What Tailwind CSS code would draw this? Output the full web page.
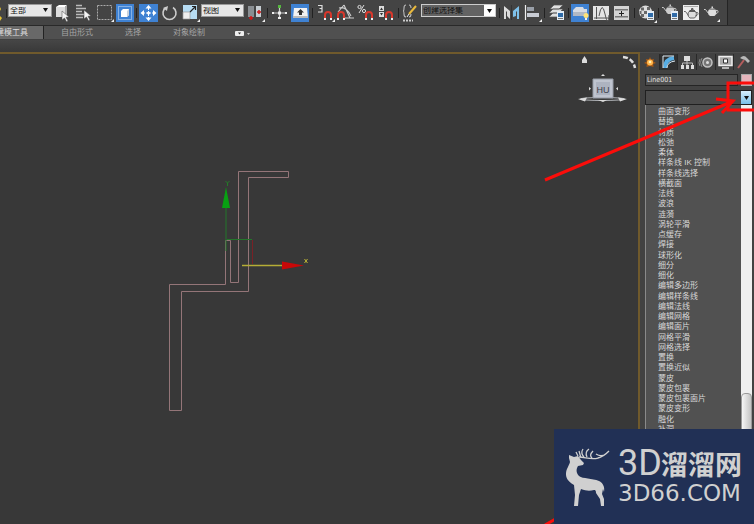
<!DOCTYPE html>
<html lang="zh-CN">
<head>
<meta charset="utf-8">
<meta name="viewport" content="width=device-width, initial-scale=1">
<title>Line001</title>
<script src="https://cdn.jsdelivr.net/npm/@tailwindcss/browser@4"></script>
</head>
<body class="relative flex min-h-screen flex-col overflow-hidden bg-[#383838] font-['Liberation_Sans','Noto_Sans_CJK_SC',sans-serif] text-[8px] leading-none text-[#d0d0d0]">

<!-- Shared icon parts -->
<svg class="hidden" aria-hidden="true">
  <defs>
    <g id="magnet"><path d="M1 8V4a3 3 0 0 1 6 0v4" fill="none" stroke="#d8382c" stroke-width="2"/><path d="M0 7h2v2H0zM6 7h2v2H6z" fill="#eee"/></g>
    <path id="pointer" d="M0 0l7 6-3 .3 2 3.700-1.500.8-2-3.800L0 9z" fill="#f4f4f4" stroke="#444" stroke-width=".5"/>
    <path id="corner" d="M3 0v3H0z" fill="#eee"/>
    <g id="teapot"><path d="M5 3.500h6.500c1.500 2 1 5-1 6.500h-4.500C3.500 8.500 3.500 5.500 5 3.500z"/><path d="M5.500 2.800q2.700-1.600 5.500 0zM7.500 .5h1.500v1.500H7.500z"/><path d="M4.500 7.500L1.500 3.500H0M12 4.500c3-1 2.500 3-.5 3.500" fill="none" stroke="currentColor"/></g>
    <g id="page"><path d="M0 0h7v9H0z" fill="#e4edf5"/><path d="M1 2h5v4H1z" fill="#2f6ba8"/><path d="M1 7.500h5" stroke="#777"/></g>
  </defs>
</svg>

<header>
  <div class="flex h-[26px] border-b border-[#292929] bg-[#3a3a3a]">
    <div role="toolbar" aria-label="主工具栏" class="flex h-[25px] shrink-0 items-center border-r border-[#242424] bg-[#444]">
      <svg class="h-5 w-2" viewBox="0 0 8 20"><path d="M0 4l1 2-1 2zM0 13l2 2-2 3z" fill="#e2c032"/><path d="M6.500 6v9" stroke="#222"/></svg>
      <div class="relative mb-1 w-11">
        <select aria-label="选择过滤器" class="block h-[13px] w-full appearance-none border border-[#999] bg-[#e6e6e6] pl-px text-[8px] leading-none text-[#111]"><option>全部</option></select>
        <svg class="pointer-events-none absolute top-1 right-1 h-1 w-[5px]" viewBox="0 0 5 4"><path d="M0 0h5L2.500 4z" fill="#111"/></svg>
      </div>
      <button aria-label="选择对象" class="h-5 w-[21px]"><svg viewBox="0 0 21 20"><path d="M4 4l3-2h8l-2 2z" fill="#fff"/><path d="M4 4h9v10H4z" fill="#ddd"/><path d="M13 4l2-2v10l-2 2z" fill="#aaa"/><use href="#pointer" x="10" y="8"/></svg></button>
      <button aria-label="按名称选择" class="h-5 w-[21px]"><svg viewBox="0 0 21 20"><path d="M3 2.500h6M3 5.500h10M3 8.500h6M3 11.500h8M3 14.500h7" stroke="#bbb" stroke-width="1.300"/><use href="#pointer" x="11" y="7"/></svg></button>
      <button aria-label="矩形选择区域" class="h-5 w-[21px]"><svg viewBox="0 0 21 20"><path d="M3.500 2.500h14v14h-14z" fill="none" stroke="#aaa" stroke-dasharray="2 1"/><use href="#corner" x="17" y="16"/></svg></button>
      <button aria-label="窗口/交叉" class="h-5 w-[21px]"><svg viewBox="0 0 21 20"><path d="M1 1h18v18H1z" fill="#3f82d3"/><path d="M3.500 3.500h13v13h-13z" fill="none" stroke="#cfe0f5" stroke-dasharray="1 1"/><path d="M6 8l2-2h6v6l-2 2H6z" fill="#fff"/><path d="M12 8l2-2v6l-2 2z" fill="#c9d2dd"/></svg></button>
      <svg class="h-5 w-0.5" viewBox="0 0 2 20"><path d="M.5 5v10" stroke="#222"/></svg>
      <button aria-label="选择并移动" class="h-5 w-[21px]"><svg viewBox="0 0 21 20"><path d="M1 1h19v18H1z" fill="#3f82d3"/><path d="M10.500 2l3 3.500h-6zM10.500 18l3-3.500h-6zM2.500 10L6 7v6zM18.500 10L15 7v6z" fill="#fff"/><path d="M10.500 5v10M5 10h11" stroke="#fff" stroke-dasharray="2 1"/><circle cx="10.500" cy="10" r="1.500" fill="#fff"/></svg></button>
      <button aria-label="选择并旋转" class="h-5 w-[21px]"><svg viewBox="0 0 21 20"><path d="M7 4.500a6.500 6.500 0 1 0 7 0" fill="none" stroke="#ccc" stroke-width="1.600"/><path d="M4 5l5-2-1 5z" fill="#ccc"/></svg></button>
      <button aria-label="选择并缩放" class="h-5 w-[21px]"><svg viewBox="0 0 21 20"><path d="M3 2h14v14H3z" fill="#b6dcf3"/><path d="M3 9h7v7H3z" fill="#eee" stroke="#999" stroke-width=".7"/><path d="M10 9l5-5M12 3.500h3.500V7" fill="none" stroke="#222" stroke-width="1.200"/><use href="#corner" x="17" y="16"/></svg></button>
      <div class="relative mb-1 w-[43px]">
        <select aria-label="参考坐标系" class="block h-[13px] w-full appearance-none border border-[#999] bg-[#e6e6e6] pl-px text-[8px] leading-none text-[#111]"><option>视图</option></select>
        <svg class="pointer-events-none absolute top-1 right-1 h-1 w-[5px]" viewBox="0 0 5 4"><path d="M0 0h5L2.500 4z" fill="#111"/></svg>
      </div>
      <button aria-label="使用轴点中心" class="ml-px h-5 w-[21px]"><svg viewBox="0 0 21 20"><path d="M3 3h6v11H3z" fill="#8a8e92"/><path d="M11 3h5v11h-5z" fill="#c7cdd2"/><path d="M4 15h4M6 13v4M12 9h4M14 7v4" stroke="#d41818" stroke-width="1.500"/><use href="#corner" x="17" y="16"/></svg></button>
      <svg class="h-5 w-[3px]" viewBox="0 0 3 20"><path d="M1.500 5v10" stroke="#222"/></svg>
      <button aria-label="选择并操纵" class="h-5 w-[21px]"><svg viewBox="0 0 21 20"><path d="M10.500 4v12M4 10h13" stroke="#ccc" stroke-width="1.200"/><path d="M9 2h3v3H9z" fill="#55b83e"/><path d="M9 14h3v2H9zM3 9h2v2H3zM16 9h2v2h-2zM9 8.500h3v3H9z" fill="#eee"/></svg></button>
      <button aria-label="键盘快捷键覆盖切换" class="h-5 w-[21px]"><svg viewBox="0 0 21 20"><path d="M1 1h18v18H1z" fill="#3f82d3"/><path d="M4 5h13l1 10H3z" fill="#f2f2f2"/><path d="M3 13h15v2H3z" fill="#bbb"/><path d="M10.500 6l3.500 3.500h-2V12H9V9.500H7z" fill="#333"/></svg></button>
      <svg class="h-5 w-1" viewBox="0 0 4 20"><path d="M1.500 5v10" stroke="#222"/></svg>
      <button aria-label="捕捉开关" class="h-5 w-5"><svg viewBox="0 0 20 20"><path d="M3 2.500h4v3H4.500M7 5v4H3" fill="none" stroke="#ddd" stroke-width="1.200"/><use href="#magnet" x="9" y="8"/><use href="#corner" x="17" y="16"/></svg></button>
      <button aria-label="角度捕捉切换" class="h-5 w-5"><svg viewBox="0 0 20 20"><path d="M3 9l6-7M9 2l6 13M8 15h11M4 5q7-2 12 8" fill="none" stroke="#ccc" stroke-width="1.100"/><use href="#magnet" x="2" y="8"/></svg></button>
      <button aria-label="百分比捕捉切换" class="h-5 w-5"><svg viewBox="0 0 20 20"><circle cx="4.500" cy="4" r="1.600" fill="none" stroke="#ddd"/><circle cx="9" cy="8" r="1.600" fill="none" stroke="#ddd"/><path d="M9 2L4 10" stroke="#ddd"/><use href="#magnet" x="10" y="8"/></svg></button>
      <button aria-label="微调器捕捉切换" class="h-5 w-5"><svg viewBox="0 0 20 20"><path d="M4 3h5v5H4zM4 9h5v5H4z" fill="#ddd"/><path d="M5 7h3L6.500 4.500zM5 10h3l-1.500 2.500z" fill="#333"/><use href="#magnet" x="10" y="8"/></svg></button>
      <svg class="h-5 w-1" viewBox="0 0 4 20"><path d="M3.500 5v10" stroke="#222"/></svg>
      <button aria-label="编辑命名选择集" class="h-5 w-[21px]"><svg viewBox="0 0 21 20"><path d="M7 2q-2 0-2 3t-1 3q1 0 1 3t2 3M10 2q2 0 2 3M12 11q0 3-2 3" fill="none" stroke="#bbb" stroke-width="1.100"/><path d="M17 3l-7 8" stroke="#e9b93d" stroke-width="2"/><path d="M10 11l-2 3" stroke="#eee"/><path d="M4 17.500h10" stroke="#ccc" stroke-width="2" stroke-dasharray="2 1"/></svg></button>
      <div class="relative mb-1 ml-px w-[75px]">
        <select aria-label="创建选择集" class="block h-[13px] w-full appearance-none border border-[#ccc] bg-[#636363] pl-px text-[8px] leading-none text-[#111]"><option>创建选择集</option></select>
        <span class="pointer-events-none absolute top-px right-px flex h-[11px] w-[11px] items-center justify-center bg-white"><svg class="h-1 w-[5px]" viewBox="0 0 5 4"><path d="M0 0h5L2.500 4z" fill="#111"/></svg></span>
      </div>
      <svg class="h-5 w-[5px]" viewBox="0 0 5 20"><path d="M3.500 5v10" stroke="#222"/></svg>
      <button aria-label="镜像" class="h-5 w-[21px]"><svg viewBox="0 0 21 20"><path d="M3 3l6 5v8l-3-3V9L5 8v8H3z" fill="#ddd"/><path d="M18 3l-6 5v6l3-1V9l1-1v8h2z" fill="#7dbfe8"/><path d="M10.500 2v15" stroke="#333"/></svg></button>
      <button aria-label="对齐" class="h-5 w-[21px]"><svg viewBox="0 0 21 20"><path d="M3.500 2v15" stroke="#eee" stroke-width="1.200"/><path d="M5 4h7v4H5z" fill="#999fa8"/><path d="M5 10h12v4H5z" fill="#c8ccd4"/><use href="#corner" x="17" y="16"/></svg></button>
      <svg class="h-5 w-[3px]" viewBox="0 0 3 20"><path d="M1.500 5v10" stroke="#222"/></svg>
      <button aria-label="层管理器" class="h-5 w-[21px]"><svg viewBox="0 0 21 20"><path d="M3 14l4-4h10l-4 4zM3 10l4-4h10l-4 4zM4 6l4-4h9l-4 4z" fill="#e0e0e0" stroke="#555" stroke-width=".7"/><use href="#page" x="11" y="8"/></svg></button>
      <svg class="h-5 w-[3px]" viewBox="0 0 3 20"><path d="M1.500 5v10" stroke="#222"/></svg>
      <button aria-label="切换功能区" class="h-5 w-[21px]"><svg viewBox="0 0 21 20"><path d="M1 1h18v18H1z" fill="#3f82d3"/><path d="M3 7l3-3h7l1 2h3v7H3z" fill="#d7dce4"/><path d="M3 9h14v4H3z" fill="#b1b9c5"/><circle cx="16" cy="12.500" r="2.500" fill="#ffe379"/><path d="M15 15h2v2h-2z" fill="#eee"/></svg></button>
      <button aria-label="曲线编辑器" class="h-5 w-[21px]"><svg viewBox="0 0 21 20"><path d="M2 3h16v14H2z" fill="#e5e5e5"/><path d="M3 15h14M5.500 4v12M8 13q3-16 6-2t4 1" fill="none" stroke="#555"/></svg></button>
      <button aria-label="图解视图" class="h-5 w-[21px]"><svg viewBox="0 0 21 20"><path d="M2 3h15v14H2z" fill="#d5d5d5"/><path d="M3 6h13v1.500H3zM3 13h13v1.500H3z" fill="#777"/><path d="M9.500 8v5M7 10.500h5" fill="none" stroke="#222"/></svg></button>
      <svg class="h-5 w-[3px]" viewBox="0 0 3 20"><path d="M1.500 5v10" stroke="#222"/></svg>
      <button aria-label="材质编辑器" class="h-5 w-[21px]"><svg viewBox="0 0 21 20"><circle cx="9.500" cy="9" r="6.500" fill="#ddd"/><path d="M5 4.500h3v3H5zM11 4h3v3h-3zM8 8h3v3H8zM3.500 8h2v3h-2zM5 11h3v3H5z" fill="#686868"/><use href="#page" x="11" y="8"/><use href="#corner" x="18" y="17"/></svg></button>
      <svg class="h-5 w-[3px]" viewBox="0 0 3 20"><path d="M1.500 5v10" stroke="#222"/></svg>
      <button aria-label="渲染设置" class="h-5 w-[21px] text-[#ccc]"><svg viewBox="0 0 21 20"><use href="#teapot" fill="#ccc" x="2" y="1"/><use href="#page" x="11" y="8"/></svg></button>
      <button aria-label="渲染帧窗口" class="h-5 w-[21px] text-[#444]"><svg viewBox="0 0 21 20"><path d="M2 2h16v15H2z" fill="#eee"/><path d="M3 3.500h14" stroke="#aaa"/><use href="#teapot" fill="#ddd" stroke="#444" stroke-width=".8" x="3" y="5"/></svg></button>
      <button aria-label="渲染产品" class="h-5 w-[21px] text-[#ccc]"><svg viewBox="0 0 21 20"><use href="#teapot" fill="#ddd" x="2" y="3"/><use href="#corner" x="15" y="16"/></svg></button>
      <span class="w-1"></span>
    </div>
  </div>
  <nav aria-label="功能区" class="flex h-[14px] items-stretch border-b border-[#404040] bg-[#505050] text-[#a5a5a5]">
    <a href="#" class="flex w-11 items-center justify-end overflow-hidden border-r border-[#222] bg-[#686868] pr-[15px] whitespace-nowrap text-[#ddd]">建模工具</a>
    <a href="#" class="flex items-center pl-[17px]">自由形式</a>
    <a href="#" class="flex items-center pl-8">选择</a>
    <a href="#" class="flex items-center pl-8">对象绘制</a>
    <button aria-label="最小化功能区" class="ml-[30px] flex items-center"><svg class="h-2 w-4" viewBox="0 0 16 8"><rect y="2" width="9" height="5" rx="1" fill="#eee"/><path d="M3 3.500h3L4.500 5.500z" fill="#333"/><path d="M12 4h3l-1.500 2z" fill="#bbb"/></svg></button>
  </nav>
  <div class="h-3 bg-linear-to-b from-[#464646] to-[#393939]"></div>
</header>

<div class="flex flex-1 items-stretch">
  <main aria-label="视口" class="relative flex-1 overflow-hidden border-t-2 border-r-2 border-[#705a2c] bg-[#383838]">
    <svg class="block h-[400px] w-[400px]" viewBox="0 54 400 400" aria-label="Line001">
      <path d="M169.500 410.500v-126h56v-44h5v42h8v-111h50v6h-40v114h-67v119z" fill="none" stroke="#947578"/>
      <path d="M226 206v45M227 239.500h25" stroke="#23762a" fill="none"/>
      <path d="M252.500 240v24" stroke="#792126"/>
      <path d="M226 187l4 21h-8z" fill="#08a012"/>
      <path d="M242 265.500h41" stroke="#b5ad36" stroke-width="1.500"/>
      <path d="M282 261.500l22 4-22 4z" fill="#c90808"/>
      <path d="M225.500 181l2 2 2-2M227.500 183v3" fill="none" stroke="#237b28"/>
      <path d="M304.500 259l3 4M307.500 259l-3 4" stroke="#bdb536"/>
    </svg>
    <svg class="absolute top-0 right-0 h-[54px] w-[68px]" viewBox="570 54 68 54" aria-label="ViewCube">
      <path d="M582 60l2.500-4 2.500 4v3h-5z" fill="#ddd"/>
      <path d="M623 57q10 1 12 11" fill="none" stroke="#ddd" stroke-width="2.500" stroke-dasharray="5 2"/>
      <ellipse cx="602.500" cy="99" rx="22" ry="1.500" fill="none" stroke="#b0b3b7"/>
      <path d="M578 99l9-1.500-2 4zM627 99l-9-1.500 2 4zM598 100h9l-4 2z" fill="#ddd"/>
      <path d="M601 76l2-2 2 2zM589 87l2 1.500-2 2zM618 87l-2 1.500 2 2z" fill="#ddd"/>
      <path d="M593 79h20v19h-20z" fill="#bfc4cf" stroke="#969ba5"/>
      <path d="M596 82h14v13h-14z" fill="#adb3c0"/>
      <text x="603" y="92.500" text-anchor="middle" font-size="9" font-family="Liberation Sans" fill="#3c414b">HU</text>
    </svg>
  </main>

  <aside aria-label="命令面板" class="w-[114px] shrink-0 border-t border-[#4c4c4c] bg-[#424242] pr-0.5 pl-[5px]">
    <div role="tablist" class="-ml-1 flex h-[18px] items-center divide-x divide-[#292929]">
      <button role="tab" aria-label="创建" class="flex flex-1 justify-center"><svg class="size-4" viewBox="0 0 16 16"><path d="M8 3l1.200 2.500L12 5l-.8 2.500L14 9l-2.800 1 .3 3-3.500-1-3.500 1 .3-3L2 9l2.800-1.500L4 5l2.800.5z" fill="#a75914"/><circle cx="8" cy="8.500" r="3" fill="#ffb64d"/><circle cx="8" cy="8" r="1.300" fill="#fff2ba"/></svg></button>
      <button role="tab" aria-label="修改" aria-selected="true" class="flex flex-1 justify-center bg-[#303030]"><svg class="size-4" viewBox="0 0 16 16"><path d="M4 14Q4 5 13 4" fill="none" stroke="#58aee4" stroke-width="4"/><path d="M2 2h11M2 2v12M6 14q0-6 8-7" fill="none" stroke="#dceaf4"/></svg></button>
      <button role="tab" aria-label="层次" class="flex flex-1 justify-center"><svg class="size-4" viewBox="0 0 16 16"><path d="M5 2h6v5H5zM2 11h3v4H2zM7 11h3v4H7zM12 11h3v4h-3z" fill="#ddd"/><path d="M8 7v4M3.500 11V9h10v2" fill="none" stroke="#bbb"/></svg></button>
      <button role="tab" aria-label="运动" class="flex flex-1 justify-center"><svg class="size-4" viewBox="0 0 16 16"><circle cx="9.500" cy="8.500" r="4.500" fill="#777" stroke="#c4c4c4" stroke-width="1.500"/><circle cx="9.500" cy="8.500" r="1.500" fill="#ddd"/><path d="M4 4q-3 4 0 9M2 5q-2 4 0 7" fill="none" stroke="#888"/></svg></button>
      <button role="tab" aria-label="显示" class="flex flex-1 justify-center"><svg class="size-4" viewBox="0 0 16 16"><path d="M2 2.500h13v9H2z" fill="#aaa" stroke="#eee" stroke-width="1.500"/><path d="M6.500 5h4v4h-4z" fill="#fff" stroke="#333"/><path d="M5 14h7" stroke="#ddd" stroke-width="1.500"/></svg></button>
      <button role="tab" aria-label="实用程序" class="flex flex-1 justify-center"><svg class="size-4" viewBox="0 0 16 16"><path d="M9 6l-6 8" stroke="#b45d5d" stroke-width="2"/><path d="M5 4q4-4 7 0l3 3-2 2-3-3-3-1z" fill="#b8b8b8"/></svg></button>
    </div>
    <div class="mt-[3px] flex h-3 items-stretch justify-between">
      <input aria-label="对象名称" value="Line001" class="w-[93px] border border-[#252525] bg-[#505050] pl-px font-['DejaVu_Sans_Condensed','DejaVu_Sans',sans-serif] text-[7px] leading-none text-[#e0e0e0]">
      <button aria-label="对象颜色" class="w-[11px] border border-[#aaa] bg-[#e5b5bc]"></button>
    </div>
    <button aria-label="修改器列表" aria-haspopup="listbox" aria-expanded="true" class="mt-1 flex h-[15px] w-full items-stretch justify-end border border-[#202020] bg-[#4b4b4b]">
      <span class="flex w-[10px] items-center justify-center bg-linear-to-b from-[#d8effc] to-[#78bfe8]"><svg class="h-1 w-[5px]" viewBox="0 0 5 4"><path d="M0 0h5L2.500 4z" fill="#111"/></svg></span>
    </button>
    <div class="flex border-l border-[#8a8a8a] bg-[#515151]">
      <ul role="listbox" aria-label="修改器" class="grid h-[330px] flex-1 auto-rows-fr items-center pt-0.5 pl-3 whitespace-nowrap text-[#d8d8d8]">
        <li role="option">曲面变形</li><li role="option">替换</li><li role="option">材质</li><li role="option">松弛</li>
        <li role="option">柔体</li><li role="option">样条线 IK 控制</li><li role="option">样条线选择</li><li role="option">横截面</li>
        <li role="option">法线</li><li role="option">波浪</li><li role="option">涟漪</li><li role="option">涡轮平滑</li>
        <li role="option">点缓存</li><li role="option">焊接</li><li role="option">球形化</li><li role="option">细分</li>
        <li role="option">细化</li><li role="option">编辑多边形</li><li role="option">编辑样条线</li><li role="option">编辑法线</li>
        <li role="option">编辑网格</li><li role="option">编辑面片</li><li role="option">网格平滑</li><li role="option">网格选择</li>
        <li role="option">置换</li><li role="option">置换近似</li><li role="option">蒙皮</li><li role="option">蒙皮包裹</li>
        <li role="option">蒙皮包裹面片</li><li role="option">蒙皮变形</li><li role="option">融化</li><li role="option">补洞</li>
      </ul>
      <div class="flex w-[11px] flex-col justify-end bg-[#efefef]">
        <div class="h-[42px] rounded-t-sm border border-[#999] bg-linear-to-r from-[#f6f6f6] to-[#c4c4c4]"></div>
      </div>
    </div>
  </aside>
</div>

<!-- Tutorial arrow and highlight, above the interface -->
<svg class="pointer-events-none absolute top-0 right-0 h-[524px] w-[214px]" viewBox="540 0 214 524" aria-hidden="true">
  <g fill="none" stroke="#fb0d0a" stroke-width="3">
    <path d="M756 83h-28v27h28"/>
    <path d="M545 180L731 102M716 99l17 2-11 12"/>
    <path d="M545 525l14-8"/>
  </g>
</svg>

<!-- Site badge -->
<div class="absolute right-0 bottom-0 flex h-[95px] w-[200px] items-center bg-[#213055] pl-3 text-[#d0d0d0]">
  <svg class="h-[60px] w-11 shrink-0" viewBox="566 446 44 60" aria-hidden="true">
    <path d="M569 454l5 2 4-1 3 4 3 3-1 2-5 1c-2 3-2 7 1 10 4 3 13 2 20 5 4 2 6 6 5 11l-1-3-1 5 2 5v7h-3l-1-7-4-6c0-3-1-3-2-3-4 1-8 1-13-1l-2 6-1 11h-4l1-11-1-10c-7-4-8-8-8-11 0-5 3-8 4-12l-1-4z" fill="#d0d0d0"/>
    <path d="M579 456c6 0 12 3 19 1 5-1 8-4 11-7M581 457l-2-7M584 456c-3-3-3-5-1-8M587 456c-2-4-1-6 2-8M592 457c-2-2-2-4 1-7M596 453c3 2 7 2 10 0M578 455l-2-4" fill="none" stroke="#d0d0d0" stroke-width="1.300"/>
  </svg>
  <div class="pl-2">
    <div class="flex h-[30px] items-center whitespace-nowrap"><span class="w-[43px] font-['Roboto',sans-serif] text-[36px] leading-none">3D</span><span class="font-['Noto_Sans_CJK_SC',sans-serif] text-[27px] leading-none font-bold">溜溜网</span></div>
    <div class="pt-1 font-['DejaVu_Sans',sans-serif] text-[23px] leading-none">3D66.COM</div>
  </div>
</div>
</body>
</html>
